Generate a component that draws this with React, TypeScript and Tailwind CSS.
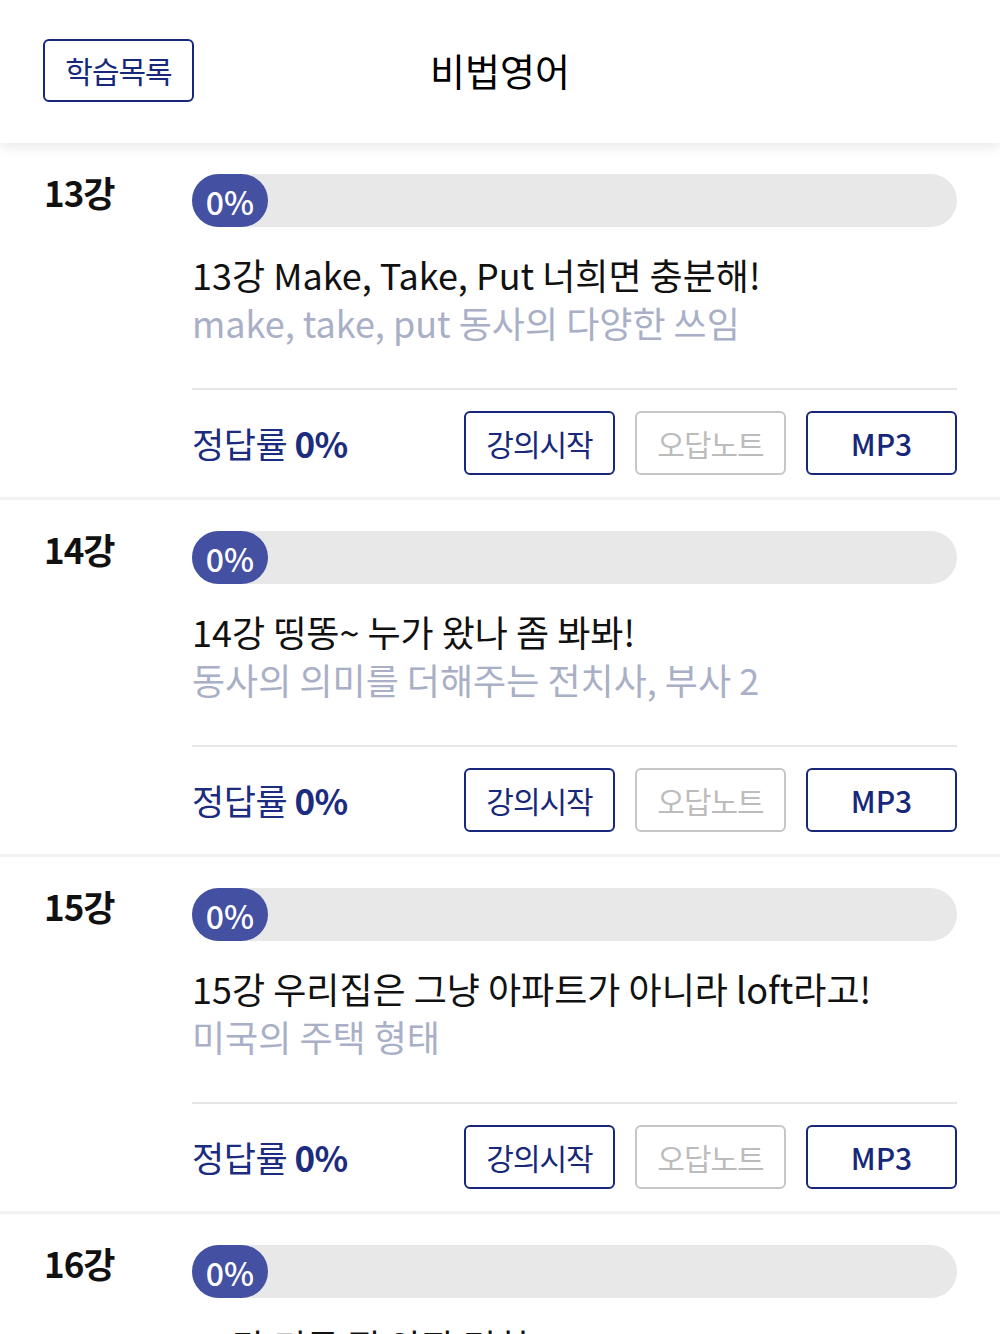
const lessons = [
  {
    no: "13강",
    title: "13강 Make, Take, Put 너희면 충분해!",
    sub: "make, take, put 동사의 다양한 쓰임",
  },
  {
    no: "14강",
    title: "14강 띵똥~ 누가 왔나 좀 봐봐!",
    sub: "동사의 의미를 더해주는 전치사, 부사 2",
  },
  {
    no: "15강",
    title: "15강 우리집은 그냥 아파트가 아니라 loft라고!",
    sub: "미국의 주택 형태",
  },
  {
    no: "16강",
    title: "16강 미국 집 안팎 명칭",
    sub: "집과 관련된 표현",
  },
];

function Lesson({ no, title, sub }: { no: string; title: string; sub: string }) {
  return (
    <section className="flex pl-[44px] pr-[43px] pt-[31px] border-b-[3px] border-[#f2f2f2]">
      <div className="w-[148px] shrink-0 h-[53px] flex items-center -mt-[8px] text-[35px] font-bold text-[#111] tracking-[-1px]">
        {no}
      </div>
      <div className="flex-1">
        <div className="h-[53px] rounded-full bg-[#e8e8e8] flex">
          <div className="w-[76px] h-full rounded-full bg-[#4450a2] flex items-center justify-center text-white text-[32px] font-medium">
            0%
          </div>
        </div>
        <div className="mt-[23px] text-[36px] leading-[48px] text-[#111] whitespace-nowrap">
          {title}
        </div>
        <div className="text-[36px] leading-[48px] text-[#a9afc6] whitespace-nowrap">
          {sub}
        </div>
        <div className="mt-[42px] h-[2px] bg-[#e6e6e6]" />
        <div className="mt-[21px] mb-[22px] flex items-center justify-between">
          <div className="text-[35px] text-[#1c2c80] tracking-[-0.5px]">
            정답률 <span className="font-bold">0%</span>
          </div>
          <div className="flex gap-[20px]">
            <button className="w-[151px] h-[64px] rounded-[6px] border-2 border-[#17287a] text-[30px] text-[#17287a] flex items-center justify-center tracking-[-1px]">
              강의시작
            </button>
            <button className="w-[151px] h-[64px] rounded-[6px] border-2 border-[#c6c6c6] text-[30px] text-[#bcbcbc] flex items-center justify-center tracking-[-1px]">
              오답노트
            </button>
            <button className="w-[151px] h-[64px] rounded-[6px] border-2 border-[#17287a] text-[30px] font-medium text-[#17287a] flex items-center justify-center">
              MP3
            </button>
          </div>
        </div>
      </div>
    </section>
  );
}

export default function App() {
  return (
    <div className="w-[1000px] h-[1334px] overflow-hidden bg-white font-['Noto_Sans_CJK_KR',sans-serif]">
      <header className="relative z-10 h-[143px] bg-white shadow-[0_4px_12px_rgba(0,0,0,0.09)] flex items-center px-[43px]">
        <button className="w-[151px] h-[63px] -mt-[3px] rounded-[6px] border-2 border-[#17287a] text-[30px] text-[#17287a] flex items-center justify-center tracking-[-1px]">
          학습목록
        </button>
        <h1 className="absolute left-0 right-0 top-[45px] text-center text-[38px] leading-[50px] text-black pointer-events-none">
          비법영어
        </h1>
      </header>
      <main>
        {lessons.map((l) => (
          <Lesson key={l.no} {...l} />
        ))}
      </main>
    </div>
  );
}
